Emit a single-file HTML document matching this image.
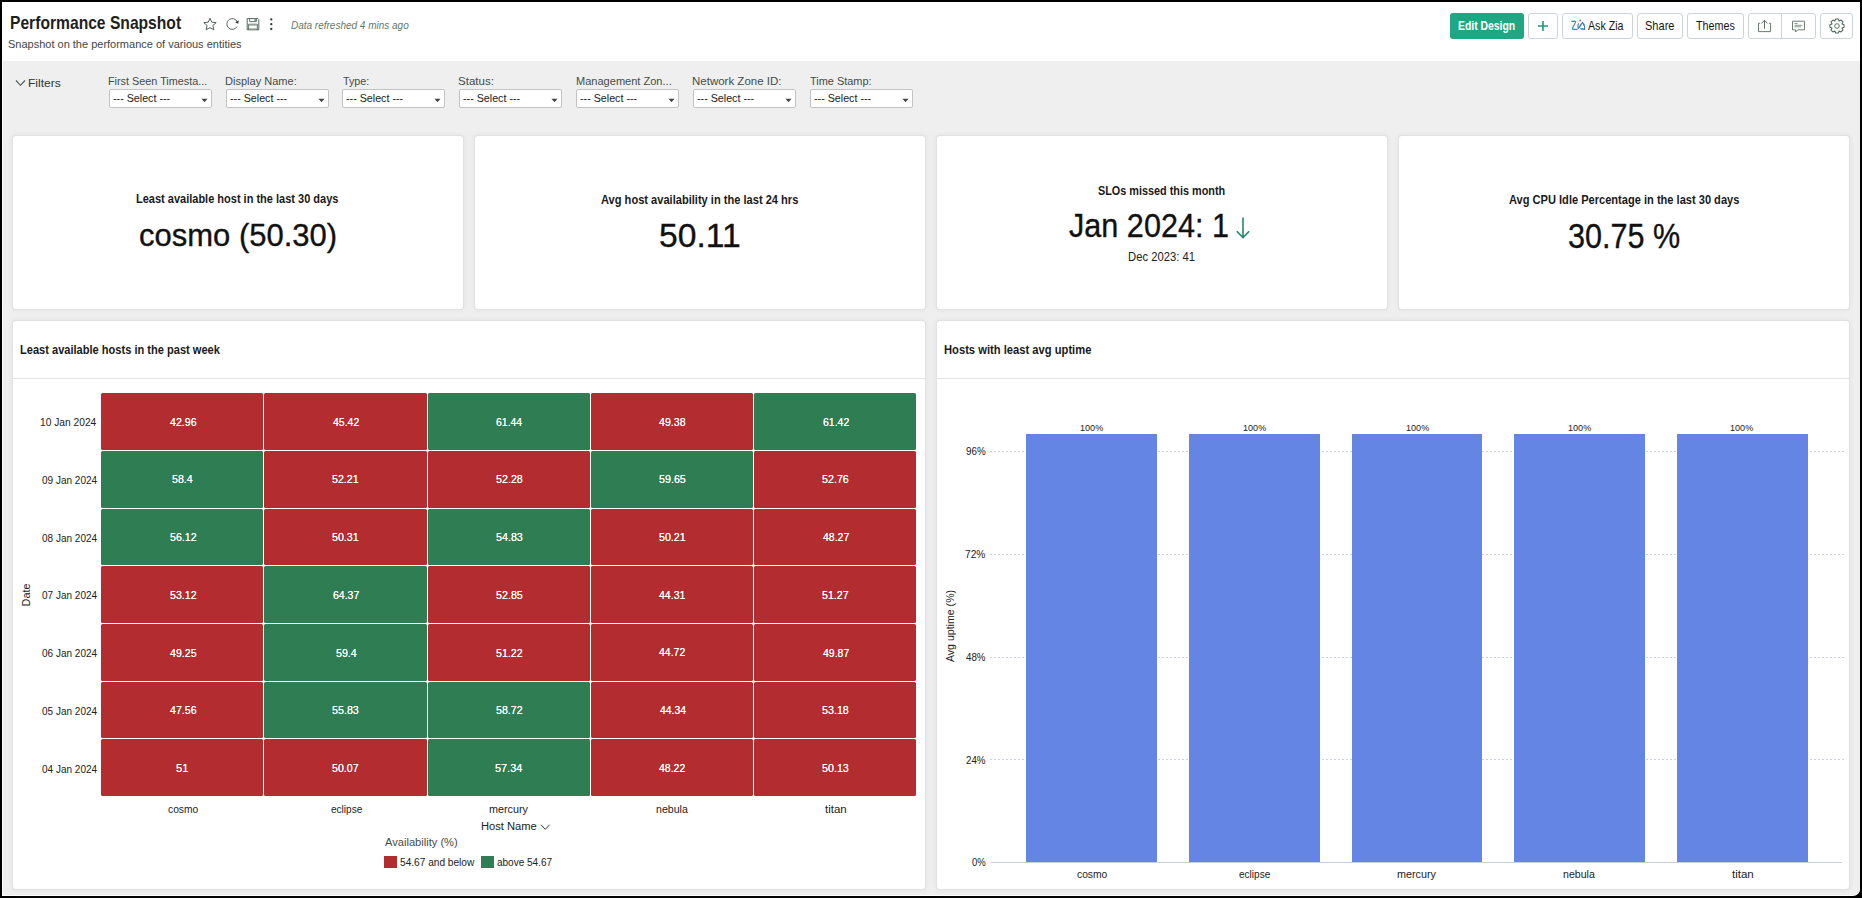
<!DOCTYPE html>
<html><head><meta charset="utf-8"><style>
html,body{margin:0;padding:0;}
body{width:1862px;height:898px;position:relative;overflow:hidden;background:#000;font-family:"Liberation Sans",sans-serif;}
.t{position:absolute;white-space:nowrap;transform-origin:0 0;}
.r{position:absolute;}
</style></head><body>
<div class="r" style="left:2px;top:2px;width:1858px;height:894px;background:#fff;border-bottom-right-radius:7px;"></div>
<div class="r" style="left:3px;top:61px;width:1857px;height:834px;background:#efefef;border-bottom-right-radius:6px;"></div>
<div class="t" style="left:9.88px;top:14.50px;font-size:17.59px;line-height:17.59px;color:#1f1f1f;font-weight:bold;transform:scaleX(0.8892);">Performance Snapshot</div>
<div class="t" style="left:8.04px;top:38.96px;font-size:11.48px;line-height:11.48px;color:#3f4643;transform:scaleX(0.9588);">Snapshot on the performance of various entities</div>
<div class="t" style="left:290.70px;top:21.08px;font-size:10.17px;line-height:10.17px;color:#5f7a6d;font-style:italic;transform:scaleX(0.9835);">Data refreshed 4 mins ago</div>

<svg class="r" style="left:202px;top:17px" width="16" height="14" viewBox="0 0 16 14"><path d="M8 1.2 L9.8 5.2 L14.2 5.6 L10.9 8.5 L11.9 12.8 L8 10.6 L4.1 12.8 L5.1 8.5 L1.8 5.6 L6.2 5.2 Z" fill="none" stroke="#46574d" stroke-width="0.95" stroke-linejoin="miter"/></svg>
<svg class="r" style="left:225px;top:17px" width="15" height="14" viewBox="0 0 15 14"><path d="M12.3 5.0 A5.4 5.4 0 1 0 12.0 9.6" fill="none" stroke="#4f6156" stroke-width="0.95"/><path d="M13.7 3.3 L13.3 6.8 L10.2 5.6 Z" fill="#2f3a33"/></svg>
<svg class="r" style="left:246px;top:17px" width="14" height="14" viewBox="0 0 14 14"><path d="M1.2 1.6 H12 L12.8 2.4 V12.8 H1.2 Z" fill="none" stroke="#56695d" stroke-width="1"/><path d="M3.6 1.6 V4.6 H10.4 V1.6" fill="none" stroke="#56695d" stroke-width="0.9"/><rect x="8.4" y="2.3" width="1.4" height="1.6" fill="#56695d"/><path d="M2.6 12.8 V7.2 H11.4 V12.8" fill="none" stroke="#56695d" stroke-width="0.9"/><path d="M3 8.6 H11 M3 11.4 H11" stroke="#9aa89f" stroke-width="0.8"/></svg>
<svg class="r" style="left:268px;top:17px" width="6" height="14" viewBox="0 0 6 14"><circle cx="3.3" cy="2.4" r="1.15" fill="#2f3833"/><circle cx="3.3" cy="7.2" r="1.15" fill="#2f3833"/><circle cx="3.3" cy="12.0" r="1.15" fill="#2f3833"/></svg>

<div class="r" style="left:1450px;top:13px;width:74px;height:26px;background:#1fa784;border-radius:3px;"></div>
<div class="t" style="left:1458.42px;top:19.78px;font-size:12.21px;line-height:12.21px;color:#ffffff;font-weight:bold;transform:scaleX(0.8519);">Edit Design</div>
<div class="r" style="left:1528px;top:13px;width:30px;height:26px;border:1px solid #cdd3da;border-radius:3px;box-sizing:border-box;background:#fff;"></div>
<svg class="r" style="left:1536px;top:19px" width="14" height="14" viewBox="0 0 14 14"><path d="M7 2 V12 M2 7 H12" stroke="#1f9a79" stroke-width="1.6"/></svg>
<div class="r" style="left:1562px;top:13px;width:71px;height:26px;border:1px solid #cdd3da;border-radius:3px;box-sizing:border-box;background:#fff;"></div>
<svg class="r" style="left:1568px;top:16px" width="22" height="18" viewBox="0 0 22 18"><path d="M3.6 5.4 H7.2 Q7.9 5.6 7.4 6.6 L4.4 12.2 Q4.2 13.4 5.4 13.4 H9.6" fill="none" stroke="#3f86c8" stroke-width="1.1"/><path d="M3.6 5.4 H7" fill="none" stroke="#1aa37e" stroke-width="1.1"/><circle cx="12.2" cy="4.5" r="0.9" fill="#4f77e8"/><path d="M10.6 7.3 Q9.2 10 10.4 12.4 L14.6 6.4 L16.6 10.5 V13.4 L12.3 12.6" fill="none" stroke="#4474dc" stroke-width="1.1" stroke-linejoin="round"/><path d="M11 11.6 L13.3 8.3 M13.6 12.9 L15.6 13.2 M15.6 7.6 L16.5 9.8" fill="none" stroke="#1aa37e" stroke-width="1.1"/></svg>
<div class="t" style="left:1587.88px;top:20.94px;font-size:11.92px;line-height:11.92px;color:#161616;transform:scaleX(0.8918);">Ask Zia</div>
<div class="r" style="left:1637px;top:13px;width:46px;height:26px;border:1px solid #cdd3da;border-radius:3px;box-sizing:border-box;background:#fff;"></div>
<div class="t" style="left:1644.70px;top:20.94px;font-size:11.92px;line-height:11.92px;color:#161616;transform:scaleX(0.9280);">Share</div>
<div class="r" style="left:1687px;top:13px;width:57px;height:26px;border:1px solid #cdd3da;border-radius:3px;box-sizing:border-box;background:#fff;"></div>
<div class="t" style="left:1696.46px;top:20.94px;font-size:11.92px;line-height:11.92px;color:#161616;transform:scaleX(0.9022);">Themes</div>
<div class="r" style="left:1748px;top:13px;width:68px;height:26px;border:1px solid #cdd3da;border-radius:3px;box-sizing:border-box;background:#fff;"></div>
<div class="r" style="left:1781px;top:13px;width:1px;height:26px;background:#cdd3da;"></div>
<svg class="r" style="left:1757px;top:19px" width="15" height="14" viewBox="0 0 15 14"><path d="M3.2 4.3 H1.5 V12.6 H13.6 V4.3 H12" fill="none" stroke="#5a7064" stroke-width="0.9"/><path d="M7.5 9.8 V1.4 M4.6 4.4 L7.5 1.3 L10.4 4.4" fill="none" stroke="#4b5d52" stroke-width="0.9"/></svg>
<svg class="r" style="left:1791px;top:20px" width="15" height="14" viewBox="0 0 15 14"><path d="M1.5 1.3 H13.5 V9.8 H6.8 L4.6 12 V9.8 H1.5 Z" fill="none" stroke="#5a7064" stroke-width="0.9"/><path d="M1.5 1.3 H13.5" stroke="#9aa6ae" stroke-width="1"/><path d="M3.5 3.5 H6.5 M3.5 5.3 H11.5 M3.5 6.8 H10" stroke="#8a9a90" stroke-width="1"/></svg>
<div class="r" style="left:1820px;top:13px;width:33px;height:26px;border:1px solid #cdd3da;border-radius:3px;box-sizing:border-box;background:#fff;"></div>
<svg class="r" style="left:1825.5px;top:14.8px" width="22" height="22" viewBox="0 0 22 22"><path d="M8.93 6.01 L9.63 3.93 L12.37 3.93 L13.07 6.01 L13.07 6.01 L15.03 5.03 L16.97 6.97 L15.99 8.93 L15.99 8.93 L18.07 9.63 L18.07 12.37 L15.99 13.07 L15.99 13.07 L16.97 15.03 L15.03 16.97 L13.07 15.99 L13.07 15.99 L12.37 18.07 L9.63 18.07 L8.93 15.99 L8.93 15.99 L6.97 16.97 L5.03 15.03 L6.01 13.07 L6.01 13.07 L3.93 12.37 L3.93 9.63 L6.01 8.93 L6.01 8.93 L5.03 6.97 L6.97 5.03 L8.93 6.01 Z" fill="none" stroke="#52685b" stroke-width="1.05" stroke-linejoin="round"/><circle cx="11" cy="11" r="2.3" fill="none" stroke="#5f7468" stroke-width="1"/></svg>
<svg class="r" style="left:15px;top:79px" width="11" height="8" viewBox="0 0 11 8"><path d="M1 1.5 L5.5 6.3 L10 1.5" fill="none" stroke="#4a5550" stroke-width="1.1"/></svg>
<div class="t" style="left:27.92px;top:77.22px;font-size:11.63px;line-height:11.63px;color:#2f3532;transform:scaleX(1.0347);">Filters</div>
<div class="t" style="left:108.35px;top:76.08px;font-size:11.34px;line-height:11.34px;color:#434d47;transform:scaleX(0.9555);">First Seen Timesta...</div>
<div class="r" style="left:109px;top:89px;width:102.5px;height:19px;border:1px solid #c3c3c3;border-radius:2px;box-sizing:border-box;background:#fff;"></div>
<div class="t" style="left:112.52px;top:92.83px;font-size:11.48px;line-height:11.48px;color:#1a1a1a;transform:scaleX(0.9334);">--- Select ---</div>
<svg class="r" style="left:201px;top:97.5px" width="7" height="5" viewBox="0 0 7 5"><path d="M0.5 0.8 H6.5 L3.5 4.3 Z" fill="#444"/></svg>
<div class="t" style="left:225.12px;top:76.40px;font-size:11.34px;line-height:11.34px;color:#434d47;transform:scaleX(0.9738);">Display Name:</div>
<div class="r" style="left:226px;top:89px;width:102.5px;height:19px;border:1px solid #c3c3c3;border-radius:2px;box-sizing:border-box;background:#fff;"></div>
<div class="t" style="left:229.52px;top:92.83px;font-size:11.48px;line-height:11.48px;color:#1a1a1a;transform:scaleX(0.9334);">--- Select ---</div>
<svg class="r" style="left:318px;top:97.5px" width="7" height="5" viewBox="0 0 7 5"><path d="M0.5 0.8 H6.5 L3.5 4.3 Z" fill="#444"/></svg>
<div class="t" style="left:342.57px;top:76.07px;font-size:11.34px;line-height:11.34px;color:#434d47;transform:scaleX(0.9442);">Type:</div>
<div class="r" style="left:342px;top:89px;width:102.5px;height:19px;border:1px solid #c3c3c3;border-radius:2px;box-sizing:border-box;background:#fff;"></div>
<div class="t" style="left:345.52px;top:92.83px;font-size:11.48px;line-height:11.48px;color:#1a1a1a;transform:scaleX(0.9334);">--- Select ---</div>
<svg class="r" style="left:434px;top:97.5px" width="7" height="5" viewBox="0 0 7 5"><path d="M0.5 0.8 H6.5 L3.5 4.3 Z" fill="#444"/></svg>
<div class="t" style="left:458.02px;top:76.42px;font-size:11.34px;line-height:11.34px;color:#434d47;transform:scaleX(1.0182);">Status:</div>
<div class="r" style="left:459px;top:89px;width:102.5px;height:19px;border:1px solid #c3c3c3;border-radius:2px;box-sizing:border-box;background:#fff;"></div>
<div class="t" style="left:462.52px;top:92.83px;font-size:11.48px;line-height:11.48px;color:#1a1a1a;transform:scaleX(0.9334);">--- Select ---</div>
<svg class="r" style="left:551px;top:97.5px" width="7" height="5" viewBox="0 0 7 5"><path d="M0.5 0.8 H6.5 L3.5 4.3 Z" fill="#444"/></svg>
<div class="t" style="left:575.68px;top:76.07px;font-size:11.34px;line-height:11.34px;color:#434d47;transform:scaleX(0.9742);">Management Zon...</div>
<div class="r" style="left:576px;top:89px;width:102.5px;height:19px;border:1px solid #c3c3c3;border-radius:2px;box-sizing:border-box;background:#fff;"></div>
<div class="t" style="left:579.52px;top:92.83px;font-size:11.48px;line-height:11.48px;color:#1a1a1a;transform:scaleX(0.9334);">--- Select ---</div>
<svg class="r" style="left:668px;top:97.5px" width="7" height="5" viewBox="0 0 7 5"><path d="M0.5 0.8 H6.5 L3.5 4.3 Z" fill="#444"/></svg>
<div class="t" style="left:691.74px;top:76.08px;font-size:11.34px;line-height:11.34px;color:#434d47;transform:scaleX(1.0149);">Network Zone ID:</div>
<div class="r" style="left:693px;top:89px;width:102.5px;height:19px;border:1px solid #c3c3c3;border-radius:2px;box-sizing:border-box;background:#fff;"></div>
<div class="t" style="left:696.52px;top:92.83px;font-size:11.48px;line-height:11.48px;color:#1a1a1a;transform:scaleX(0.9334);">--- Select ---</div>
<svg class="r" style="left:785px;top:97.5px" width="7" height="5" viewBox="0 0 7 5"><path d="M0.5 0.8 H6.5 L3.5 4.3 Z" fill="#444"/></svg>
<div class="t" style="left:809.56px;top:76.40px;font-size:11.34px;line-height:11.34px;color:#434d47;transform:scaleX(0.9659);">Time Stamp:</div>
<div class="r" style="left:810px;top:89px;width:102.5px;height:19px;border:1px solid #c3c3c3;border-radius:2px;box-sizing:border-box;background:#fff;"></div>
<div class="t" style="left:813.52px;top:92.83px;font-size:11.48px;line-height:11.48px;color:#1a1a1a;transform:scaleX(0.9334);">--- Select ---</div>
<svg class="r" style="left:902px;top:97.5px" width="7" height="5" viewBox="0 0 7 5"><path d="M0.5 0.8 H6.5 L3.5 4.3 Z" fill="#444"/></svg>
<div class="r" style="left:13px;top:136px;width:450px;height:173px;background:#fff;border-radius:3px;box-shadow:0 0 0 1px #e2e2e2, 0 0 2px 2px #e8e8e8, 0 0 4px 3px #ececec;"></div>
<div class="r" style="left:475px;top:136px;width:450px;height:173px;background:#fff;border-radius:3px;box-shadow:0 0 0 1px #e2e2e2, 0 0 2px 2px #e8e8e8, 0 0 4px 3px #ececec;"></div>
<div class="r" style="left:937px;top:136px;width:450px;height:173px;background:#fff;border-radius:3px;box-shadow:0 0 0 1px #e2e2e2, 0 0 2px 2px #e8e8e8, 0 0 4px 3px #ececec;"></div>
<div class="r" style="left:1399px;top:136px;width:450px;height:173px;background:#fff;border-radius:3px;box-shadow:0 0 0 1px #e2e2e2, 0 0 2px 2px #e8e8e8, 0 0 4px 3px #ececec;"></div>
<div class="t" style="left:135.82px;top:193.13px;font-size:12.50px;line-height:12.50px;color:#1a1a1a;font-weight:bold;transform:scaleX(0.8801);">Least available host in the last 30 days</div>
<div class="t" style="left:138.76px;top:218.71px;font-size:31.98px;line-height:31.98px;color:#111;transform:scaleX(0.9695);-webkit-text-stroke:0.35px #111;">cosmo (50.30)</div>
<div class="t" style="left:601.28px;top:193.70px;font-size:12.65px;line-height:12.65px;color:#1a1a1a;font-weight:bold;transform:scaleX(0.8769);">Avg host availability in the last 24 hrs</div>
<div class="t" style="left:658.85px;top:219.18px;font-size:33.43px;line-height:33.43px;color:#111;transform:scaleX(1.0071);-webkit-text-stroke:0.35px #111;">50.11</div>
<div class="t" style="left:1097.87px;top:185.14px;font-size:12.79px;line-height:12.79px;color:#1a1a1a;font-weight:bold;transform:scaleX(0.8483);">SLOs missed this month</div>
<div class="t" style="left:1069.44px;top:209.30px;font-size:33.28px;line-height:33.28px;color:#111;transform:scaleX(0.9202);-webkit-text-stroke:0.35px #111;">Jan 2024: 1</div>
<svg class="r" style="left:1234px;top:216px" width="18" height="24" viewBox="0 0 18 24"><path d="M9 1.5 V21.5 M2.8 15.2 L9 21.6 L15.2 15.2" fill="none" stroke="#23896a" stroke-width="1.6"/></svg>
<div class="t" style="left:1128.32px;top:251.96px;font-size:11.92px;line-height:11.92px;color:#222;transform:scaleX(0.9461);">Dec 2023: 41</div>
<div class="t" style="left:1508.84px;top:195.01px;font-size:11.92px;line-height:11.92px;color:#1a1a1a;font-weight:bold;transform:scaleX(0.9300);">Avg CPU Idle Percentage in the last 30 days</div>
<div class="t" style="left:1567.78px;top:218.60px;font-size:34.16px;line-height:34.16px;color:#111;transform:scaleX(0.8949);-webkit-text-stroke:0.35px #111;">30.75 %</div>
<div class="r" style="left:13px;top:321px;width:912px;height:568px;background:#fff;border-radius:3px;box-shadow:0 0 0 1px #e2e2e2, 0 0 2px 2px #e8e8e8, 0 0 4px 3px #ececec;"></div>
<div class="r" style="left:937px;top:321px;width:912px;height:568px;background:#fff;border-radius:3px;box-shadow:0 0 0 1px #e2e2e2, 0 0 2px 2px #e8e8e8, 0 0 4px 3px #ececec;"></div>
<div class="r" style="left:13px;top:378px;width:912px;height:1px;background:#e3e3e3;"></div>
<div class="r" style="left:937px;top:378px;width:912px;height:1px;background:#e3e3e3;"></div>
<div class="t" style="left:19.60px;top:343.52px;font-size:12.94px;line-height:12.94px;color:#1a1a1a;font-weight:bold;transform:scaleX(0.8554);">Least available hosts in the past week</div>
<div class="t" style="left:944.15px;top:343.52px;font-size:12.94px;line-height:12.94px;color:#1a1a1a;font-weight:bold;transform:scaleX(0.8652);">Hosts with least avg uptime</div>
<div class="r" style="left:101.20px;top:393.20px;width:162.16px;height:56.69px;background:#b22c30;border-radius:1.5px;"></div>
<div class="t" style="left:170.13px;top:415.59px;font-size:11.63px;line-height:11.63px;color:#ffffff;text-shadow:0 0 0.5px #fff;transform:scaleX(0.9117);">42.96</div>
<div class="r" style="left:264.36px;top:393.20px;width:162.16px;height:56.69px;background:#b22c30;border-radius:1.5px;"></div>
<div class="t" style="left:333.05px;top:415.59px;font-size:11.63px;line-height:11.63px;color:#ffffff;text-shadow:0 0 0.5px #fff;transform:scaleX(0.9027);">45.42</div>
<div class="r" style="left:427.52px;top:393.20px;width:162.16px;height:56.69px;background:#2e7d53;border-radius:1.5px;"></div>
<div class="t" style="left:496.38px;top:415.59px;font-size:11.63px;line-height:11.63px;color:#ffffff;text-shadow:0 0 0.5px #fff;transform:scaleX(0.8996);">61.44</div>
<div class="r" style="left:590.68px;top:393.20px;width:162.16px;height:56.69px;background:#b22c30;border-radius:1.5px;"></div>
<div class="t" style="left:659.16px;top:415.59px;font-size:11.63px;line-height:11.63px;color:#ffffff;text-shadow:0 0 0.5px #fff;transform:scaleX(0.9117);">49.38</div>
<div class="r" style="left:753.84px;top:393.20px;width:162.16px;height:56.69px;background:#2e7d53;border-radius:1.5px;"></div>
<div class="t" style="left:823.11px;top:415.59px;font-size:11.63px;line-height:11.63px;color:#ffffff;text-shadow:0 0 0.5px #fff;transform:scaleX(0.9042);">61.42</div>
<div class="t" style="left:40.45px;top:417.13px;font-size:11.05px;line-height:11.05px;color:#222;transform:scaleX(0.9250);">10 Jan 2024</div>
<div class="r" style="left:101.20px;top:450.89px;width:162.16px;height:56.69px;background:#2e7d53;border-radius:1.5px;"></div>
<div class="t" style="left:172.04px;top:473.33px;font-size:11.63px;line-height:11.63px;color:#ffffff;text-shadow:0 0 0.5px #fff;transform:scaleX(0.9153);">58.4</div>
<div class="r" style="left:264.36px;top:450.89px;width:162.16px;height:56.69px;background:#b22c30;border-radius:1.5px;"></div>
<div class="t" style="left:332.31px;top:473.33px;font-size:11.63px;line-height:11.63px;color:#ffffff;text-shadow:0 0 0.5px #fff;transform:scaleX(0.9178);">52.21</div>
<div class="r" style="left:427.52px;top:450.89px;width:162.16px;height:56.69px;background:#b22c30;border-radius:1.5px;"></div>
<div class="t" style="left:495.76px;top:473.33px;font-size:11.63px;line-height:11.63px;color:#ffffff;text-shadow:0 0 0.5px #fff;transform:scaleX(0.9224);">52.28</div>
<div class="r" style="left:590.68px;top:450.89px;width:162.16px;height:56.69px;background:#2e7d53;border-radius:1.5px;"></div>
<div class="t" style="left:658.50px;top:473.33px;font-size:11.63px;line-height:11.63px;color:#ffffff;text-shadow:0 0 0.5px #fff;transform:scaleX(0.9224);">59.65</div>
<div class="r" style="left:753.84px;top:450.89px;width:162.16px;height:56.69px;background:#b22c30;border-radius:1.5px;"></div>
<div class="t" style="left:822.05px;top:473.33px;font-size:11.63px;line-height:11.63px;color:#ffffff;text-shadow:0 0 0.5px #fff;transform:scaleX(0.9224);">52.76</div>
<div class="t" style="left:41.62px;top:474.86px;font-size:11.05px;line-height:11.05px;color:#222;transform:scaleX(0.9059);">09 Jan 2024</div>
<div class="r" style="left:101.20px;top:508.57px;width:162.16px;height:56.69px;background:#2e7d53;border-radius:1.5px;"></div>
<div class="t" style="left:169.66px;top:531.06px;font-size:11.63px;line-height:11.63px;color:#ffffff;text-shadow:0 0 0.5px #fff;transform:scaleX(0.9133);">56.12</div>
<div class="r" style="left:264.36px;top:508.57px;width:162.16px;height:56.69px;background:#b22c30;border-radius:1.5px;"></div>
<div class="t" style="left:332.31px;top:531.06px;font-size:11.63px;line-height:11.63px;color:#ffffff;text-shadow:0 0 0.5px #fff;transform:scaleX(0.9178);">50.31</div>
<div class="r" style="left:427.52px;top:508.57px;width:162.16px;height:56.69px;background:#2e7d53;border-radius:1.5px;"></div>
<div class="t" style="left:495.76px;top:531.06px;font-size:11.63px;line-height:11.63px;color:#ffffff;text-shadow:0 0 0.5px #fff;transform:scaleX(0.9224);">54.83</div>
<div class="r" style="left:590.68px;top:508.57px;width:162.16px;height:56.69px;background:#b22c30;border-radius:1.5px;"></div>
<div class="t" style="left:658.60px;top:531.06px;font-size:11.63px;line-height:11.63px;color:#ffffff;text-shadow:0 0 0.5px #fff;transform:scaleX(0.9178);">50.21</div>
<div class="r" style="left:753.84px;top:508.57px;width:162.16px;height:56.69px;background:#b22c30;border-radius:1.5px;"></div>
<div class="t" style="left:822.89px;top:531.06px;font-size:11.63px;line-height:11.63px;color:#ffffff;text-shadow:0 0 0.5px #fff;transform:scaleX(0.9027);">48.27</div>
<div class="t" style="left:41.62px;top:532.59px;font-size:11.05px;line-height:11.05px;color:#222;transform:scaleX(0.9059);">08 Jan 2024</div>
<div class="r" style="left:101.20px;top:566.26px;width:162.16px;height:56.69px;background:#b22c30;border-radius:1.5px;"></div>
<div class="t" style="left:169.66px;top:588.79px;font-size:11.63px;line-height:11.63px;color:#ffffff;text-shadow:0 0 0.5px #fff;transform:scaleX(0.9133);">53.12</div>
<div class="r" style="left:264.36px;top:566.26px;width:162.16px;height:56.69px;background:#2e7d53;border-radius:1.5px;"></div>
<div class="t" style="left:333.28px;top:588.79px;font-size:11.63px;line-height:11.63px;color:#ffffff;text-shadow:0 0 0.5px #fff;transform:scaleX(0.9042);">64.37</div>
<div class="r" style="left:427.52px;top:566.26px;width:162.16px;height:56.69px;background:#b22c30;border-radius:1.5px;"></div>
<div class="t" style="left:495.76px;top:588.79px;font-size:11.63px;line-height:11.63px;color:#ffffff;text-shadow:0 0 0.5px #fff;transform:scaleX(0.9224);">52.85</div>
<div class="r" style="left:590.68px;top:566.26px;width:162.16px;height:56.69px;background:#b22c30;border-radius:1.5px;"></div>
<div class="t" style="left:659.25px;top:588.79px;font-size:11.63px;line-height:11.63px;color:#ffffff;text-shadow:0 0 0.5px #fff;transform:scaleX(0.9072);">44.31</div>
<div class="r" style="left:753.84px;top:566.26px;width:162.16px;height:56.69px;background:#b22c30;border-radius:1.5px;"></div>
<div class="t" style="left:822.23px;top:588.79px;font-size:11.63px;line-height:11.63px;color:#ffffff;text-shadow:0 0 0.5px #fff;transform:scaleX(0.9133);">51.27</div>
<div class="t" style="left:41.62px;top:590.32px;font-size:11.05px;line-height:11.05px;color:#222;transform:scaleX(0.9059);">07 Jan 2024</div>
<div class="r" style="left:101.20px;top:623.94px;width:162.16px;height:56.69px;background:#b22c30;border-radius:1.5px;"></div>
<div class="t" style="left:170.13px;top:646.52px;font-size:11.63px;line-height:11.63px;color:#ffffff;text-shadow:0 0 0.5px #fff;transform:scaleX(0.9117);">49.25</div>
<div class="r" style="left:264.36px;top:623.94px;width:162.16px;height:56.69px;background:#2e7d53;border-radius:1.5px;"></div>
<div class="t" style="left:335.59px;top:646.52px;font-size:11.63px;line-height:11.63px;color:#ffffff;text-shadow:0 0 0.5px #fff;transform:scaleX(0.9153);">59.4</div>
<div class="r" style="left:427.52px;top:623.94px;width:162.16px;height:56.69px;background:#b22c30;border-radius:1.5px;"></div>
<div class="t" style="left:495.95px;top:646.52px;font-size:11.63px;line-height:11.63px;color:#ffffff;text-shadow:0 0 0.5px #fff;transform:scaleX(0.9133);">51.22</div>
<div class="r" style="left:590.68px;top:623.94px;width:162.16px;height:56.69px;background:#b22c30;border-radius:1.5px;"></div>
<div class="t" style="left:659.34px;top:646.38px;font-size:11.63px;line-height:11.63px;color:#ffffff;text-shadow:0 0 0.5px #fff;transform:scaleX(0.9027);">44.72</div>
<div class="r" style="left:753.84px;top:623.94px;width:162.16px;height:56.69px;background:#b22c30;border-radius:1.5px;"></div>
<div class="t" style="left:822.89px;top:646.52px;font-size:11.63px;line-height:11.63px;color:#ffffff;text-shadow:0 0 0.5px #fff;transform:scaleX(0.9027);">49.87</div>
<div class="t" style="left:41.62px;top:648.05px;font-size:11.05px;line-height:11.05px;color:#222;transform:scaleX(0.9059);">06 Jan 2024</div>
<div class="r" style="left:101.20px;top:681.63px;width:162.16px;height:56.69px;background:#b22c30;border-radius:1.5px;"></div>
<div class="t" style="left:170.13px;top:704.25px;font-size:11.63px;line-height:11.63px;color:#ffffff;text-shadow:0 0 0.5px #fff;transform:scaleX(0.9117);">47.56</div>
<div class="r" style="left:264.36px;top:681.63px;width:162.16px;height:56.69px;background:#2e7d53;border-radius:1.5px;"></div>
<div class="t" style="left:332.22px;top:704.25px;font-size:11.63px;line-height:11.63px;color:#ffffff;text-shadow:0 0 0.5px #fff;transform:scaleX(0.9224);">55.83</div>
<div class="r" style="left:427.52px;top:681.63px;width:162.16px;height:56.69px;background:#2e7d53;border-radius:1.5px;"></div>
<div class="t" style="left:495.95px;top:704.25px;font-size:11.63px;line-height:11.63px;color:#ffffff;text-shadow:0 0 0.5px #fff;transform:scaleX(0.9133);">58.72</div>
<div class="r" style="left:590.68px;top:681.63px;width:162.16px;height:56.69px;background:#b22c30;border-radius:1.5px;"></div>
<div class="t" style="left:659.69px;top:704.25px;font-size:11.63px;line-height:11.63px;color:#ffffff;text-shadow:0 0 0.5px #fff;transform:scaleX(0.8977);">44.34</div>
<div class="r" style="left:753.84px;top:681.63px;width:162.16px;height:56.69px;background:#b22c30;border-radius:1.5px;"></div>
<div class="t" style="left:822.05px;top:704.25px;font-size:11.63px;line-height:11.63px;color:#ffffff;text-shadow:0 0 0.5px #fff;transform:scaleX(0.9224);">53.18</div>
<div class="t" style="left:41.62px;top:705.79px;font-size:11.05px;line-height:11.05px;color:#222;transform:scaleX(0.9059);">05 Jan 2024</div>
<div class="r" style="left:101.20px;top:739.31px;width:162.16px;height:56.69px;background:#b22c30;border-radius:1.5px;"></div>
<div class="t" style="left:176.28px;top:762.12px;font-size:11.63px;line-height:11.63px;color:#ffffff;text-shadow:0 0 0.5px #fff;transform:scaleX(0.9678);">51</div>
<div class="r" style="left:264.36px;top:739.31px;width:162.16px;height:56.69px;background:#b22c30;border-radius:1.5px;"></div>
<div class="t" style="left:332.40px;top:761.98px;font-size:11.63px;line-height:11.63px;color:#ffffff;text-shadow:0 0 0.5px #fff;transform:scaleX(0.9133);">50.07</div>
<div class="r" style="left:427.52px;top:739.31px;width:162.16px;height:56.69px;background:#2e7d53;border-radius:1.5px;"></div>
<div class="t" style="left:495.48px;top:761.98px;font-size:11.63px;line-height:11.63px;color:#ffffff;text-shadow:0 0 0.5px #fff;transform:scaleX(0.9362);">57.34</div>
<div class="r" style="left:590.68px;top:739.31px;width:162.16px;height:56.69px;background:#b22c30;border-radius:1.5px;"></div>
<div class="t" style="left:659.34px;top:761.98px;font-size:11.63px;line-height:11.63px;color:#ffffff;text-shadow:0 0 0.5px #fff;transform:scaleX(0.9027);">48.22</div>
<div class="r" style="left:753.84px;top:739.31px;width:162.16px;height:56.69px;background:#b22c30;border-radius:1.5px;"></div>
<div class="t" style="left:822.05px;top:761.98px;font-size:11.63px;line-height:11.63px;color:#ffffff;text-shadow:0 0 0.5px #fff;transform:scaleX(0.9224);">50.13</div>
<div class="t" style="left:41.62px;top:763.52px;font-size:11.05px;line-height:11.05px;color:#222;transform:scaleX(0.9059);">04 Jan 2024</div>
<div class="t" style="left:167.52px;top:805.12px;font-size:10.17px;line-height:10.17px;color:#222;transform:scaleX(1.0104);">cosmo</div>
<div class="t" style="left:330.58px;top:805.30px;font-size:10.17px;line-height:10.17px;color:#222;transform:scaleX(0.9893);">eclipse</div>
<div class="t" style="left:489.47px;top:805.16px;font-size:10.17px;line-height:10.17px;color:#222;transform:scaleX(1.0630);">mercury</div>
<div class="t" style="left:655.83px;top:805.26px;font-size:10.17px;line-height:10.17px;color:#222;transform:scaleX(1.0426);">nebula</div>
<div class="t" style="left:825.01px;top:805.26px;font-size:10.17px;line-height:10.17px;color:#222;transform:scaleX(1.1348);">titan</div>
<div class="t" style="left:480.99px;top:819.61px;font-size:11.63px;line-height:11.63px;color:#222;transform:scaleX(0.9586);">Host Name</div>
<svg class="r" style="left:540px;top:822.5px" width="11" height="8" viewBox="0 0 11 8"><path d="M1 1.8 L5.3 6.3 L9.6 1.8" fill="none" stroke="#333" stroke-width="1"/></svg>
<div class="t" style="left:1px;top:589px;width:50px;height:12px;font-size:10.8px;line-height:12px;color:#222;transform:rotate(-90deg);transform-origin:50% 50%;text-align:center;">Date</div>
<div class="t" style="left:384.56px;top:835.83px;font-size:11.63px;line-height:11.63px;color:#474b49;transform:scaleX(0.9563);">Availability (%)</div>
<div class="r" style="left:384px;top:856px;width:13px;height:12px;background:#b22c30;"></div>
<div class="t" style="left:399.60px;top:856.77px;font-size:11.05px;line-height:11.05px;color:#222;transform:scaleX(0.9162);">54.67 and below</div>
<div class="r" style="left:481px;top:856px;width:13px;height:12px;background:#2e7d53;"></div>
<div class="t" style="left:496.50px;top:856.77px;font-size:11.05px;line-height:11.05px;color:#222;transform:scaleX(0.9046);">above 54.67</div>
<div class="t" style="left:971.63px;top:858.22px;font-size:10.17px;line-height:10.17px;color:#222;transform:scaleX(0.9336);">0%</div>
<svg class="r" style="left:989px;top:759px" width="855" height="1" viewBox="0 0 855 1"><line x1="0" y1="0.5" x2="855" y2="0.5" stroke="#cdd3db" stroke-width="1" stroke-dasharray="2 2" stroke-dashoffset="-1"/></svg>
<div class="t" style="left:965.79px;top:755.84px;font-size:10.17px;line-height:10.17px;color:#222;transform:scaleX(0.9619);">24%</div>
<svg class="r" style="left:989px;top:657px" width="855" height="1" viewBox="0 0 855 1"><line x1="0" y1="0.5" x2="855" y2="0.5" stroke="#cdd3db" stroke-width="1" stroke-dasharray="2 2" stroke-dashoffset="-1"/></svg>
<div class="t" style="left:965.87px;top:652.78px;font-size:10.17px;line-height:10.17px;color:#222;transform:scaleX(0.9584);">48%</div>
<svg class="r" style="left:989px;top:554px" width="855" height="1" viewBox="0 0 855 1"><line x1="0" y1="0.5" x2="855" y2="0.5" stroke="#cdd3db" stroke-width="1" stroke-dasharray="2 2" stroke-dashoffset="-1"/></svg>
<div class="t" style="left:964.97px;top:549.60px;font-size:10.17px;line-height:10.17px;color:#222;transform:scaleX(1.0021);">72%</div>
<svg class="r" style="left:989px;top:451px" width="855" height="1" viewBox="0 0 855 1"><line x1="0" y1="0.5" x2="855" y2="0.5" stroke="#cdd3db" stroke-width="1" stroke-dasharray="2 2" stroke-dashoffset="-1"/></svg>
<div class="t" style="left:965.67px;top:447.34px;font-size:10.17px;line-height:10.17px;color:#222;transform:scaleX(0.9680);">96%</div>
<div class="r" style="left:991px;top:862px;width:851px;height:1px;background:#c8d0da;"></div>
<div class="r" style="left:1026.30px;top:434.1px;width:130.5px;height:428.10px;background:#6585e5;"></div>
<div class="t" style="left:1079.98px;top:423.35px;font-size:9.88px;line-height:9.88px;color:#222;transform:scaleX(0.9182);">100%</div>
<div class="t" style="left:1076.54px;top:870.24px;font-size:10.17px;line-height:10.17px;color:#222;transform:scaleX(1.0104);">cosmo</div>
<div class="r" style="left:1189.00px;top:434.1px;width:130.5px;height:428.10px;background:#6585e5;"></div>
<div class="t" style="left:1242.76px;top:423.35px;font-size:9.88px;line-height:9.88px;color:#222;transform:scaleX(0.9182);">100%</div>
<div class="t" style="left:1238.84px;top:870.42px;font-size:10.17px;line-height:10.17px;color:#222;transform:scaleX(0.9893);">eclipse</div>
<div class="r" style="left:1351.70px;top:434.1px;width:130.5px;height:428.10px;background:#6585e5;"></div>
<div class="t" style="left:1405.54px;top:423.35px;font-size:9.88px;line-height:9.88px;color:#222;transform:scaleX(0.9182);">100%</div>
<div class="t" style="left:1396.96px;top:870.28px;font-size:10.17px;line-height:10.17px;color:#222;transform:scaleX(1.0630);">mercury</div>
<div class="r" style="left:1514.40px;top:434.1px;width:130.5px;height:428.10px;background:#6585e5;"></div>
<div class="t" style="left:1568.32px;top:423.35px;font-size:9.88px;line-height:9.88px;color:#222;transform:scaleX(0.9182);">100%</div>
<div class="t" style="left:1563.36px;top:870.38px;font-size:10.17px;line-height:10.17px;color:#222;transform:scaleX(1.0426);">nebula</div>
<div class="r" style="left:1677.10px;top:434.1px;width:130.5px;height:428.10px;background:#6585e5;"></div>
<div class="t" style="left:1730.30px;top:423.35px;font-size:9.88px;line-height:9.88px;color:#222;transform:scaleX(0.9182);">100%</div>
<div class="t" style="left:1731.78px;top:870.38px;font-size:10.17px;line-height:10.17px;color:#222;transform:scaleX(1.1348);">titan</div>
<div class="t" style="left:900px;top:620px;width:100px;height:12px;font-size:10.8px;line-height:12px;color:#222;transform:rotate(-90deg) scaleX(0.98);transform-origin:50% 50%;text-align:center;white-space:nowrap;">Avg uptime (%)</div>
</body></html>
